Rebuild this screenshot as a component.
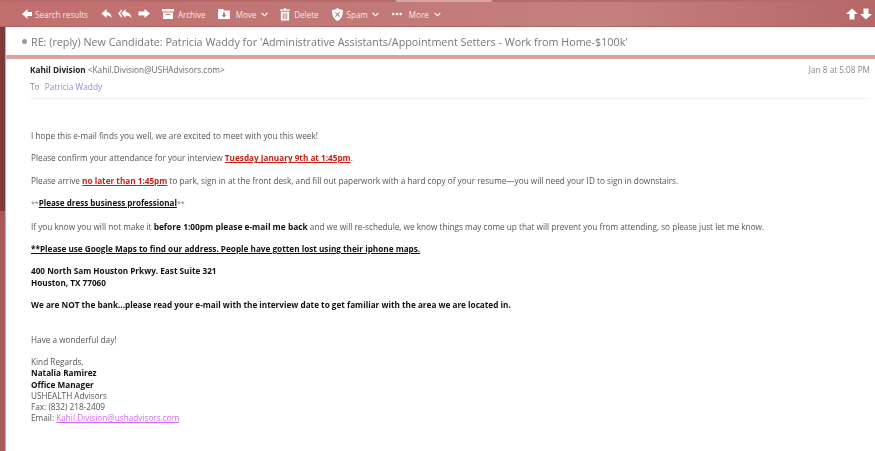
<div class="page">
  <div class="topline"><span class="tab"></span></div>
  <div class="toolbar">
    <button class="tool back">
      <svg width="12" height="12" viewBox="0 0 12 12"><path d="M6.500 1 1 6l5.500 5V8H11V4H6.500z"/></svg>
      <span>Search results</span>
    </button>
    <div class="nav">
      <svg width="11" height="10" viewBox="0 0 11 10"><path d="M5.500 0 .5 4.500 5.500 9V6.500c2 0 4 .6 5.300 2.500C10.500 6 8.500 3 5.500 2.800z"/></svg>
      <svg width="14" height="10" viewBox="0 0 14 10"><path d="M4 0 0 4.500 4 9V7L2 4.500 4 2zM7.500 0 3.500 4.500 7.500 9V6.500c2.500 0 4.800.8 6 2.500C13 6 11 3 7.500 2.800z"/></svg>
      <svg width="12" height="10" viewBox="0 0 12 10"><path d="M6.500 0 12 4.500 6.500 9V6.500H.5v-4h6z"/></svg>
    </div>
    <button class="tool archive">
      <svg width="12" height="12" viewBox="0 0 12 12"><path fill-rule="evenodd" d="M0 1h12v2.500H0zM1 4.500h10V11H1zM4 6v1h4V6z"/></svg>
      <span>Archive</span>
    </button>
    <button class="tool move">
      <svg width="12" height="12" viewBox="0 0 12 12"><path fill-rule="evenodd" d="M0 1h5l1 1.500h6V11H0zM5 4.500V7H3.500L6 9.500 8.500 7H7V4.500z"/></svg>
      <span>Move</span>
      <svg class="chev" width="7" height="5" viewBox="0 0 7 5"><path d="M.7 1 3.500 3.800 6.300 1"/></svg>
    </button>
    <button class="tool delete">
      <svg width="10" height="13" viewBox="0 0 11 13"><path fill-rule="evenodd" d="M4 0h3v1h4v1.500H0V1h4zM1 3.500h9V13H1zM3 5v6.500h1V5zM5 5v6.500h1V5zM7 5v6.500h1V5z"/></svg>
      <span>Delete</span>
    </button>
    <button class="tool spam">
      <svg width="11" height="13" viewBox="0 0 11 13"><path fill-rule="evenodd" d="M5.500 0C7 1.200 9 2 11 2c0 5-1.500 9-5.500 11C1.500 11 0 7 0 2c2-.1 4-.8 5.500-2zM3.500 4 3 4.700 4.800 6.500 3 8.300l.7.700 1.800-1.800L7.300 9l.7-.7-1.800-1.800L8 4.700 7.300 4 5.500 5.800z"/></svg>
      <span>Spam</span>
      <svg class="chev" width="7" height="5" viewBox="0 0 7 5"><path d="M.7 1 3.500 3.800 6.300 1"/></svg>
    </button>
    <button class="tool more">
      <svg width="10" height="4" viewBox="0 0 10 4"><circle cx="1.300" cy="2" r="1.300"/><circle cx="5" cy="2" r="1.300"/><circle cx="8.700" cy="2" r="1.300"/></svg>
      <span>More</span>
      <svg class="chev" width="7" height="5" viewBox="0 0 7 5"><path d="M.7 1 3.500 3.800 6.300 1"/></svg>
    </button>
    <div class="arrows">
      <svg width="12" height="12" viewBox="0 0 12 12"><path d="M6 .5 12 6H8.500v5.500h-5V6H0z"/></svg>
      <svg width="12" height="12" viewBox="0 0 12 12"><path d="M6 11.500 12 6H8.500V.5h-5V6H0z"/></svg>
    </div>
  </div>

  <div class="frame">
    <div class="rail"></div>
    <div class="panel">
      <div class="subject">
        <i class="dot"></i>
        <h1>RE: (reply) New Candidate: Patricia Waddy for 'Administrative Assistants/Appointment Setters - Work from Home-$100k'</h1>
      </div>
      <div class="band"></div>

      <div class="head">
        <div class="from"><div><b>Kahil Division</b> <span>&lt;Kahil.Division@USHAdvisors.com&gt;</span></div><time>Jan 8 at 5:08 PM</time></div>
        <div class="to"><span>To</span> <em>Patricia Waddy</em></div>
      </div>

      <div class="body">
        <p>I hope this e-mail finds you well, we are excited to meet with you this week!</p>
        <p>Please confirm your attendance for your interview <u class="red">Tuesday January 9th at 1:45pm</u>.</p>
        <p>Please arrive <u class="red">no later than 1:45pm</u> to park, sign in at the front desk, and fill out paperwork with a hard copy of your resume—you will need your ID to sign in downstairs.</p>
        <p><span class="stars">**</span><u class="blk dress">Please dress business professional</u><span class="stars">**</span></p>
        <p>If you know you will not make it <b class="wide">before 1:00pm please e-mail me back</b> and we will re-schedule, we know things may come up that will prevent you from attending, so please just let me know.</p>
        <p><u class="blk">**Please use Google Maps to find our address. People have gotten lost using their iphone maps.</u></p>
        <p class="blk">400 North Sam Houston Prkwy. East Suite 321<br />Houston, TX 77060</p>
        <p class="blk">We are NOT the bank...please read your e-mail with the interview date to get familiar with the area we are located in.</p>
        <p class="wonder">Have a wonderful day!</p>
        <p class="sign">Kind Regards,<br /><b>Natalia Ramirez</b><br /><b>Office Manager</b><br />USHEALTH Advisors<br />Fax: (832) 218-2409<br />Email: <a href="#top">Kahil.Division@ushadvisors.com</a></p>
      </div>
    </div>
  </div>
</div>

<style>
  :global(body) { margin: 0; background: #fff; overflow: hidden; }
  .page { width: 875px; height: 451px; display: flex; flex-direction: column; overflow: hidden; font-family: "Open Sans", "Noto Sans", sans-serif; font-size: 8.220px; color: #555; filter: blur(0.3px); }
  .topline { height: 2px; background: #b86a6a; position: relative; flex: none; }
  .tab { position: absolute; left: 396px; width: 96px; top: 0; height: 2px; background: #d9a5a3; }
  .toolbar { height: 24px; flex: none; display: flex; align-items: center; background: linear-gradient(90deg, #bf6f6e 0%, #c27a78 45%, #c5807e 70%, #b46766 100%); border-bottom: 1px solid #ad6464; padding: 0 3px 0 21px; }
  .toolbar svg { fill: #fff; flex: none; }
  .tool { all: unset; display: flex; align-items: center; gap: 2px; font-size: 8.050px; color: #f6e6e5; }
  .tool svg.chev { fill: none; stroke: #fff; stroke-width: 1.100; }
  .back { margin-right: 13px; }
  .nav { display: flex; gap: 6px; align-items: center; margin-right: 12px; }
  .archive { margin-right: 12px; gap: 4px; }
  .move { margin-right: 12px; gap: 6px; }
  .move svg.chev { margin-left: -1px; }
  .delete { margin-right: 13px; gap: 4px; }
  .spam { margin-right: 13px; gap: 4px; }
  .more { gap: 7px; }
  .more svg.chev { margin-left: -2px; }
  .arrows { margin-left: auto; display: flex; gap: 2px; }

  .frame { flex: 1; display: flex; min-height: 0; }
  .rail { width: 5px; flex: none; border-right: 1px solid #d9a5a3; background: linear-gradient(180deg, #7f3b3b 0 184px, #a95a5a 184px 100%); }
  .panel { flex: 1; min-width: 0; }
  .subject { height: 28px; display: flex; align-items: center; gap: 4px; padding-left: 16px; }
  .dot { width: 5px; height: 5px; border-radius: 50%; background: #9a9a9a; flex: none; }
  h1 { margin: 0; font-size: 10.760px; font-weight: 400; color: #777; white-space: nowrap; }
  .band { height: 4px; background: #dca3a3; }
  .head { margin: 3px 5px 0 24px; height: 37px; border-bottom: 1px solid #f1f1f1; box-sizing: border-box; font-size: 8.300px; }
  .from { display: flex; justify-content: space-between; height: 14px; align-items: center; }
  .from b { color: #222; font-weight: 700; }
  .from span { color: #666; }
  time { color: #888; font-size: 8.220px; }
  .to { margin-top: 5px; color: #888; }
  .to em { font-style: normal; color: #8f8fdc; margin-left: 3px; }
  .body { margin-left: 25px; margin-top: 31px; line-height: 11.300px; }
  p { margin: 0 0 11.100px; white-space: nowrap; }
  .red { color: #cc1f14; font-weight: 700; font-size: 8.200px; }
  .blk, b { color: #111; font-weight: 700; font-size: 8.200px; }
  .dress { font-size: 8.050px; }
  .stars { font-size: 7px; color: #777; }
  b.wide { font-size: 8.350px; }
  .wonder { margin-top: 23.300px; margin-bottom: 11px; }
  .sign b { color: #111; }
  a { color: #cf6bf0; }
</style>
